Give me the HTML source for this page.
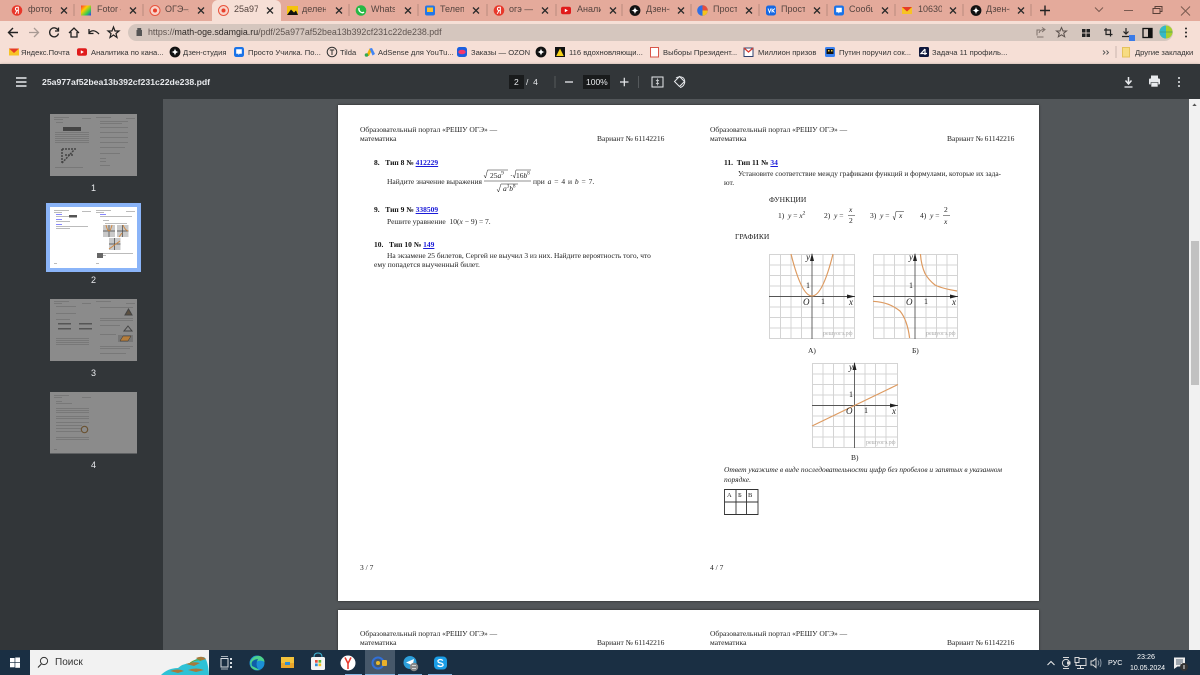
<!DOCTYPE html>
<html lang="ru"><head><meta charset="utf-8"><title>25a977af52bea13b392cf231c22de238.pdf</title>
<style>
html,body{margin:0;padding:0;width:1200px;height:675px;overflow:hidden;background:#525659}
#r{position:relative;width:1200px;height:675px;overflow:hidden;filter:blur(.3px);font-family:"Liberation Sans",sans-serif}
.b{position:absolute}
.t,.m,.p,.c{position:absolute;white-space:nowrap;z-index:2}
.t{top:4px;font-size:9px;line-height:11px;color:#55443f;width:24px;overflow:hidden}
.m{top:47px;font-size:7.6px;line-height:11px;color:#333}
.p{font:7.5px/10px "Liberation Serif",serif;color:#222;margin-top:1px}
.p b{color:#111}.p a{color:#1a1ad8;text-decoration:underline}
.p i{font-style:italic}
.c{color:#e8eaed}
svg{position:absolute;left:0;top:0}
</style></head><body><div id="r">

<div class="b" style="left:0;top:0;width:1200px;height:21px;background:#e4aa9b"></div>
<div class="b" style="left:0;top:21px;width:1200px;height:43px;background:#f6dfd6"></div>
<div class="b" style="left:212px;top:0;width:69px;height:22px;background:#f6dfd6;border-radius:6px 6px 0 0"></div>
<div class="b" style="left:128px;top:24px;width:1045px;height:17px;border-radius:9px;background:#d5c6be"></div>
<div class="b" style="left:0;top:64px;width:1200px;height:35px;background:#323639;box-shadow:0 1px 3px rgba(0,0,0,.5)"></div>
<div class="b" style="left:0;top:99px;width:163px;height:551px;background:#323639"></div>
<div class="b" style="left:163px;top:99px;width:1026px;height:551px;background:#525659"></div>
<div class="b" style="left:338px;top:105px;width:701px;height:496px;background:#fff;box-shadow:0 0 2px #222"></div>
<div class="b" style="left:338px;top:610px;width:701px;height:50px;background:#fff;box-shadow:0 0 2px #222"></div>
<div class="b" style="left:1189px;top:99px;width:11px;height:551px;background:#f1f1f1"></div>
<div class="b" style="left:1191px;top:241px;width:8px;height:144px;background:#c1c1c1"></div>
<div class="b" style="left:0;top:650px;width:1200px;height:25px;background:#1a2f43"></div>
<div class="b" style="left:30px;top:650px;width:179px;height:25px;background:#f2f2f2"></div>
<div class="b" style="left:365px;top:650px;width:30px;height:25px;background:#46586a"></div>

<span class="t" style="left:28px">фоторе</span>
<span class="t" style="left:97px">Fotor —</span>
<span class="t" style="left:165px">ОГЭ–202</span>
<span class="t" style="left:234px">25a977a</span>
<span class="t" style="left:302px">деление</span>
<span class="t" style="left:371px">WhatsAp</span>
<span class="t" style="left:440px">Телепро</span>
<span class="t" style="left:509px">огэ — Я</span>
<span class="t" style="left:577px">Аналит</span>
<span class="t" style="left:646px">Дзен-ст</span>
<span class="t" style="left:713px">Просто</span>
<span class="t" style="left:781px">Просто</span>
<span class="t" style="left:849px">Сообще</span>
<span class="t" style="left:918px">10630 -</span>
<span class="t" style="left:986px">Дзен-ст</span>

<span class="c" style="left:148px;top:26px;font-size:8.85px;line-height:13px;color:#5f5450">https://<span style="color:#2f2a28">math-oge.sdamgia.ru</span>/pdf/25a977af52bea13b392cf231c22de238.pdf</span>

<span class="m" style="left:21px">Яндекс.Почта</span>
<span class="m" style="left:91px">Аналитика по кана...</span>
<span class="m" style="left:183px">Дзен-студия</span>
<span class="m" style="left:248px">Просто Училка. По...</span>
<span class="m" style="left:340px">Tilda</span>
<span class="m" style="left:378px">AdSense для YouTu...</span>
<span class="m" style="left:471px">Заказы — OZON</span>
<span class="m" style="left:569px">116 вдохновляющи...</span>
<span class="m" style="left:663px">Выборы Президент...</span>
<span class="m" style="left:758px">Миллион призов</span>
<span class="m" style="left:839px">Путин поручил сок...</span>
<span class="m" style="left:932px">Задача 11 профиль...</span>
<span class="m" style="left:1135px">Другие закладки</span>

<span class="c" style="left:42px;top:76px;font-size:8.7px;line-height:13px;font-weight:bold">25a977af52bea13b392cf231c22de238.pdf</span>
<div class="b" style="left:509px;top:75px;width:15px;height:14px;background:#191b1c"></div>
<span class="c" style="left:514px;top:76px;font-size:8.5px;line-height:12px">2</span>
<span class="c" style="left:526px;top:76px;font-size:8.5px;line-height:12px">/&nbsp;&nbsp;4</span>
<div class="b" style="left:583px;top:75px;width:27px;height:14px;background:#191b1c"></div>
<span class="c" style="left:586px;top:76px;font-size:8.5px;line-height:12px">100%</span>

<span class="c" style="left:91px;top:183px;font-size:9px;line-height:11px">1</span>
<span class="c" style="left:91px;top:275px;font-size:9px;line-height:11px">2</span>
<span class="c" style="left:91px;top:368px;font-size:9px;line-height:11px">3</span>
<span class="c" style="left:91px;top:460px;font-size:9px;line-height:11px">4</span>

<!-- PDF page left -->
<span class="p" style="left:360px;top:124px">Образовательный портал «РЕШУ ОГЭ» —</span>
<span class="p" style="left:360px;top:133px">математика</span>
<span class="p" style="left:597px;top:133px">Вариант № 61142216</span>
<span class="p" style="left:374px;top:157px"><b>8.&nbsp;&nbsp;&nbsp;Тип 8 № <a>412229</a></b></span>
<span class="p" style="left:387px;top:176px">Найдите значение выражения</span>
<span class="p" style="left:533px;top:176px;word-spacing:1px">при <i>a</i> = 4 и <i>b</i> = 7.</span>
<span class="p" style="left:374px;top:204px"><b>9.&nbsp;&nbsp;&nbsp;Тип 9 № <a>338509</a></b></span>
<span class="p" style="left:387px;top:216px">Решите уравнение&nbsp; 10(<i>x</i> − 9) = 7.</span>
<span class="p" style="left:374px;top:239px"><b>10.&nbsp;&nbsp;&nbsp;Тип 10 № <a>149</a></b></span>
<span class="p" style="left:387px;top:250px;font-size:7.43px">На экзамене 25 билетов, Сергей не выучил 3 из них. Найдите вероятность того, что</span>
<span class="p" style="left:374px;top:259px">ему попадется выученный билет.</span>
<span class="p" style="left:360px;top:562px">3 / 7</span>
<!-- formula 8 -->
<span class="p" style="left:490px;top:170px">25<i>a</i><sup style="font-size:5px;line-height:0">9</sup></span>
<span class="p" style="left:510px;top:170px">·</span>
<span class="p" style="left:516px;top:170px">16<i>b</i><sup style="font-size:5px;line-height:0">8</sup></span>
<span class="p" style="left:503px;top:183px"><i>a</i><sup style="font-size:5px;line-height:0">3</sup><i>b</i><sup style="font-size:5px;line-height:0">8</sup></span>

<!-- PDF page right -->
<span class="p" style="left:710px;top:124px">Образовательный портал «РЕШУ ОГЭ» —</span>
<span class="p" style="left:710px;top:133px">математика</span>
<span class="p" style="left:947px;top:133px">Вариант № 61142216</span>
<span class="p" style="left:724px;top:157px"><b>11.&nbsp;&nbsp;Тип 11 № <a>34</a></b></span>
<span class="p" style="left:738px;top:168px;font-size:7.3px">Установите соответствие между графиками функций и формулами, которые их зада-</span>
<span class="p" style="left:724px;top:177px">ют.</span>
<span class="p" style="left:769px;top:194px">ФУНКЦИИ</span>
<span class="p" style="left:778px;top:210px">1)&nbsp; <i>y</i> = <i>x</i><sup style="font-size:5.5px;line-height:0">2</sup></span>
<span class="p" style="left:824px;top:210px">2)&nbsp; <i>y</i> =</span>
<span class="p" style="left:849px;top:204px"><i>x</i></span>
<span class="p" style="left:849px;top:215px">2</span>
<span class="p" style="left:870px;top:210px">3)&nbsp; <i>y</i> = </span>
<span class="p" style="left:899px;top:210px"><i>x</i></span>
<span class="p" style="left:920px;top:210px">4)&nbsp; <i>y</i> =</span>
<span class="p" style="left:944px;top:204px">2</span>
<span class="p" style="left:944px;top:216px"><i>x</i></span>
<span class="p" style="left:735px;top:231px">ГРАФИКИ</span>
<span class="p" style="left:808px;top:345px">А)</span>
<span class="p" style="left:912px;top:345px">Б)</span>
<span class="p" style="left:851px;top:452px">В)</span>
<span class="p" style="left:724px;top:464px;font-size:7.45px"><i>Ответ укажите в виде последовательности цифр без пробелов и запятых в указанном</i></span>
<span class="p" style="left:724px;top:474px"><i>порядке.</i></span>
<span class="p" style="left:727px;top:490px;font-size:6.5px">А</span>
<span class="p" style="left:738px;top:490px;font-size:6.5px">Б</span>
<span class="p" style="left:748px;top:490px;font-size:6.5px">В</span>
<span class="p" style="left:710px;top:562px">4 / 7</span>

<!-- bottom page -->
<span class="p" style="left:360px;top:628px">Образовательный портал «РЕШУ ОГЭ» —</span>
<span class="p" style="left:360px;top:637px">математика</span>
<span class="p" style="left:597px;top:637px">Вариант № 61142216</span>
<span class="p" style="left:710px;top:628px">Образовательный портал «РЕШУ ОГЭ» —</span>
<span class="p" style="left:710px;top:637px">математика</span>
<span class="p" style="left:947px;top:637px">Вариант № 61142216</span>

<!-- graph labels -->
<span class="p" style="left:806px;top:251px;font-size:9px"><i>y</i></span>
<span class="p" style="left:806px;top:280px;font-size:8px">1</span>
<span class="p" style="left:803px;top:296px;font-size:9px"><i>O</i></span>
<span class="p" style="left:821px;top:296px;font-size:8px">1</span>
<span class="p" style="left:849px;top:296px;font-size:9px"><i>x</i></span>
<span class="p" style="left:823px;top:328px;font-size:6px;color:#aaa">решуогэ.рф</span>
<span class="p" style="left:909px;top:251px;font-size:9px"><i>y</i></span>
<span class="p" style="left:909px;top:280px;font-size:8px">1</span>
<span class="p" style="left:906px;top:296px;font-size:9px"><i>O</i></span>
<span class="p" style="left:924px;top:296px;font-size:8px">1</span>
<span class="p" style="left:952px;top:296px;font-size:9px"><i>x</i></span>
<span class="p" style="left:926px;top:328px;font-size:6px;color:#aaa">решуогэ.рф</span>
<span class="p" style="left:849px;top:361px;font-size:9px"><i>y</i></span>
<span class="p" style="left:849px;top:389px;font-size:8px">1</span>
<span class="p" style="left:846px;top:405px;font-size:9px"><i>O</i></span>
<span class="p" style="left:864px;top:405px;font-size:8px">1</span>
<span class="p" style="left:892px;top:405px;font-size:9px"><i>x</i></span>
<span class="p" style="left:866px;top:437px;font-size:6px;color:#aaa">решуогэ.рф</span>

<!-- taskbar text -->
<span class="c" style="left:55px;top:656px;font-size:10px;line-height:13px;color:#333">Поиск</span>
<span class="c" style="left:1108px;top:657px;font-size:7.2px;line-height:11px;color:#fff">РУС</span>
<span class="c" style="left:1137px;top:651px;font-size:7.2px;line-height:11px;color:#fff">23:26</span>
<span class="c" style="left:1130px;top:663px;font-size:7px;line-height:11px;color:#fff">10.05.2024</span>

<svg width="1200" height="675" viewBox="0 0 1200 675" fill="none">
<defs>
<linearGradient id="rb" x1="0" y1="0" x2="1" y2="1"><stop offset="0" stop-color="#f33"/><stop offset=".35" stop-color="#fc0"/><stop offset=".7" stop-color="#3c5"/><stop offset="1" stop-color="#33f"/></linearGradient>
<g id="x"><path d="M-3-3L3 3M3-3L-3 3" stroke="#2a2a2a" stroke-width="1.3"/></g>
<g id="ya"><circle r="5.3" fill="#e8372a"/><path d="M1.3 3.2V-3.2H.2Q-1.6-3.2-1.6-1.5Q-1.6-.2 0 0L-1.8 3.2M1.3-.1H0" stroke="#fff" stroke-width="1"/></g>
<g id="dz"><circle r="5.4" fill="#111"/><path d="M0-3.6Q.4-.4 3.6 0Q.4.4 0 3.6Q-.4.4-3.6 0Q-.4-.4 0-3.6Z" fill="#fff"/></g>
<g id="oge"><circle r="5" fill="#f9d3c9" stroke="#e8553f" stroke-width="1"/><circle r="2" fill="#e8402c"/></g>
<g id="ch"><rect x="-5" y="-5" width="10" height="10" rx="2.2" fill="#1a73e8"/><path d="M-2.8-2.8H2.8V1.8H.6L-.6 3V1.8H-2.8Z" fill="#fff"/></g>
<g id="yt"><rect x="-5" y="-3.7" width="10" height="7.4" rx="2" fill="#e01b1b"/><path d="M-1.2-1.7L1.9 0L-1.2 1.7Z" fill="#fff"/></g>
<g id="ml"><path d="M-5-3.5H5V3.5H-5Z" fill="#f7c325"/><path d="M-5-3.5L0 1L5-3.5Z" fill="#e63b26"/></g>
</defs>

<!-- tab separators -->
<g stroke="#b98a7e" stroke-width="1"><path d="M74 4V16M143 4V16M349 4V16M418 4V16M487 4V16M556 4V16M622 4V16M691 4V16M759 4V16M827 4V16M895 4V16M963 4V16M1031 4V16"/></g>
<!-- tab icons -->
<use href="#ya" x="17" y="10.500"/>
<rect x="81" y="5.500" width="10" height="10" fill="url(#rb)"/>
<use href="#oge" x="155" y="10.500"/><use href="#oge" x="223.500" y="10.500"/>
<rect x="287" y="6" width="11" height="9" fill="#f4c20d"/><path d="M287 15L291 9.500L294 12.500L296 10.500L298 15Z" fill="#111"/>
<circle cx="361" cy="10.500" r="5.300" fill="#25b844"/><path d="M359 8Q358.500 10.500 360.500 12Q362.500 13.500 364 12" stroke="#fff" stroke-width="1.400"/>
<rect x="425" y="5.500" width="10" height="10" rx="2" fill="#2276e8"/><rect x="427" y="7.500" width="6" height="4.500" fill="#fbc02d"/>
<use href="#ya" x="499" y="10.500"/><use href="#yt" x="566" y="10.500"/><use href="#dz" x="635" y="10.500"/>
<circle cx="702.500" cy="10.500" r="5.300" fill="#2f6fe4"/><path d="M702.500 5.200A5.300 5.300 0 0 1 702.500 15.800Z" fill="#f6c21c"/><path d="M702.500 5.200A5.300 5.300 0 0 1 707.800 10.500H702.500Z" fill="#e84b3c"/>
<rect x="766" y="5.500" width="10" height="10" rx="2.400" fill="#1668e3"/><path d="M768 8.500L769.500 12.500L771 8.500M775 8.500L772.500 10.500L774.500 12.500M772 8.500V12.500" stroke="#fff" stroke-width=".9"/>
<use href="#ch" x="839" y="10.500"/><use href="#ml" x="907" y="10.500"/><use href="#dz" x="976" y="10.500"/>
<!-- tab close -->
<g><use href="#x" x="64" y="10.500"/><use href="#x" x="133" y="10.500"/><use href="#x" x="201" y="10.500"/><use href="#x" x="270" y="10.500"/><use href="#x" x="339" y="10.500"/><use href="#x" x="408" y="10.500"/><use href="#x" x="476" y="10.500"/><use href="#x" x="545" y="10.500"/><use href="#x" x="613" y="10.500"/><use href="#x" x="681" y="10.500"/><use href="#x" x="749" y="10.500"/><use href="#x" x="817" y="10.500"/><use href="#x" x="885" y="10.500"/><use href="#x" x="953" y="10.500"/><use href="#x" x="1021" y="10.500"/></g>
<path d="M1040 10.500H1050M1045 5.500V15.500" stroke="#222" stroke-width="1.400"/>
<!-- window -->
<path d="M1095 7.500L1099 11.500L1103 7.500" stroke="#7a5a50"/>
<path d="M1124 10.500H1133" stroke="#7a5a50"/>
<path d="M1153 8.500H1160V13.500H1153ZM1155 8.500V6.500H1162V11.500H1160" stroke="#5a4038"/>
<path d="M1181 6.500L1190 15.500M1190 6.500L1181 15.500" stroke="#7a5a50"/>

<!-- toolbar -->
<path d="M18 32.500H8.500M13 28L8.500 32.500L13 37" stroke="#222" stroke-width="1.400"/>
<path d="M29 32.500H38.500M34 28L38.500 32.500L34 37" stroke="#a89a94" stroke-width="1.300"/>
<path d="M58 30A4.500 4.500 0 1 0 58.500 33.500M58.500 27.500V31H55" stroke="#222" stroke-width="1.300"/>
<path d="M69 33L74 28L79 33M71 32V37H77V32" stroke="#222" stroke-width="1.300"/>
<path d="M89 33Q93 28 99 34M89 29V33.500H93.500" stroke="#222" stroke-width="1.300"/>
<path d="M113.500 27L115 31H119L116 33.500L117 37.500L113.500 35L110 37.500L111 33.500L108 31H112Z" stroke="#222" stroke-width="1.200"/>
<path d="M137 30.500H141.500V35.500H137ZM137.800 30.500V28.500H140.700V30.500" stroke="#555" fill="#555"/>
<path d="M1037 35.500V30H1040M1043.500 37H1037M1039 33Q1040 29.500 1044 29.500M1042 27.500L1045 29.500L1042 32" stroke="#7d706a"/>
<path d="M1061.500 27.500L1063 31H1066.500L1063.700 33.200L1064.700 36.800L1061.500 34.800L1058.300 36.800L1059.300 33.200L1056.500 31H1060Z" stroke="#5a504c"/>
<g fill="#222"><rect x="1082" y="29" width="3.500" height="3.500"/><rect x="1086.500" y="29" width="3.500" height="3.500"/><rect x="1082" y="33.500" width="3.500" height="3.500"/><rect x="1086.500" y="33.500" width="3.500" height="3.500"/></g>
<path d="M1104 30H1110.500V36.500M1106 28V34.500H1112.500" stroke="#222" stroke-width="1.200"/>
<path d="M1126 28V34M1123.500 31.500L1126 34L1128.500 31.500M1122 36.500H1130" stroke="#222" stroke-width="1.200"/>
<rect x="1129" y="35" width="6" height="6" fill="#3a7be8"/>
<rect x="1143" y="28.500" width="9" height="9" stroke="#111" stroke-width="1.300"/><rect x="1148" y="28.500" width="4" height="9" fill="#111"/>
<circle cx="1166" cy="32" r="6.500" fill="#a7cf2e"/><path d="M1166 25.500A6.500 6.500 0 0 0 1166 38.500" fill="#35b8c8"/><path d="M1159.500 32H1172.500" stroke="#3a8f6a" stroke-width=".6"/>
<g fill="#222"><circle cx="1186" cy="28.500" r="1"/><circle cx="1186" cy="32.500" r="1"/><circle cx="1186" cy="36.500" r="1"/></g>

<!-- bookmarks -->
<g><use href="#ml" transform="translate(14 52)"/><use href="#yt" x="82" y="52"/><use href="#dz" x="175" y="52"/><use href="#ch" x="239" y="52"/>
<circle cx="332" cy="52" r="4.800" stroke="#333"/><path d="M329.800 50H334.200M332 50V55" stroke="#333"/>
<path d="M366 56L369.500 48.500L372 50L369 56Z" fill="#f4b400"/><path d="M369.500 48.500L372 48L375 54L372.500 55.500Z" fill="#4285f4"/><circle cx="366.500" cy="55" r="1.800" fill="#34a853"/>
<rect x="457" y="47" width="10" height="10" rx="2.500" fill="#1a5fe0"/><ellipse cx="462" cy="52" rx="3.700" ry="2.300" fill="#f4386c"/>
<use href="#dz" x="541" y="52"/>
<rect x="555" y="47" width="10" height="10" fill="#111"/><path d="M560 48.500L563.800 56H556.200Z" fill="#f7d117"/>
<rect x="650.500" y="47.500" width="8" height="9.500" stroke="#d9564a" fill="#fff"/>
<path d="M744 48H753V56.500H744Z" fill="#fff" stroke="#30406e"/><path d="M744 48L748.500 52L753 48" stroke="#d83a2e" stroke-width="1.300"/>
<rect x="825" y="47" width="10" height="10" rx="1.500" fill="#3b82f0"/><rect x="826.500" y="49" width="7" height="5" fill="#111"/><rect x="828" y="50" width="1.500" height="1.500" fill="#f5d142"/><rect x="831" y="50" width="1.500" height="1.500" fill="#f5d142"/>
<rect x="919" y="47" width="10" height="10" rx="1.500" fill="#10183c"/><path d="M925 49V55M925 49L921 53.500H927" stroke="#fff" stroke-width="1.200"/>
<path d="M1103 50.500L1105 52.500L1103 54.500M1106.500 50.500L1108.500 52.500L1106.500 54.500" stroke="#555" stroke-width=".9"/>
<path d="M1116 46V58" stroke="#c9b6ae"/>
<path d="M1122.500 47.500H1129.500V57H1122.500Z" fill="#f7dc83" stroke="#e5c25c"/></g>

<!-- pdf toolbar -->
<path d="M16 78H26.500M16 82H26.500M16 86H26.500" stroke="#e8eaed" stroke-width="1.400"/>
<path d="M555 76V88" stroke="#55595c"/><path d="M565 82H573" stroke="#e8eaed" stroke-width="1.300"/>
<path d="M620 82H628.500M624.300 77.700V86.300" stroke="#e8eaed" stroke-width="1.200"/><path d="M638.500 76V88" stroke="#55595c"/>
<rect x="652" y="77" width="11" height="10" stroke="#e8eaed"/><path d="M657.500 78.500V81M656 80L657.500 81.500L659 80M657.500 85.500V83M656 84L657.500 82.500L659 84" stroke="#e8eaed" stroke-width=".7"/>
<path d="M679.500 76.500L684.500 81.500L679.500 86.500L674.500 81.500Z" stroke="#e8eaed"/><path d="M676 78Q680 75.500 683.500 78A6 6 0 0 1 680 87.500" stroke="#e8eaed"/>
<path d="M1128.500 77V83.500M1125.500 80.500L1128.500 84L1131.500 80.500" stroke="#e8eaed" stroke-width="1.500"/><path d="M1124.500 87H1132.500" stroke="#e8eaed" stroke-width="1.300"/>
<rect x="1149" y="78.500" width="11" height="6" rx="1" fill="#e8eaed"/><rect x="1151" y="75.500" width="7" height="3" fill="#e8eaed"/><rect x="1151" y="82.500" width="7" height="4.500" fill="#e8eaed" stroke="#323639" stroke-width=".6"/>
<g fill="#e8eaed"><circle cx="1179" cy="78" r="1"/><circle cx="1179" cy="82" r="1"/><circle cx="1179" cy="86" r="1"/></g>

<!-- thumbnails -->
<rect x="46" y="203" width="95" height="69" fill="#8ab4f8"/>
<rect x="50" y="207" width="87" height="61" fill="#fff"/>
<rect x="50" y="114" width="87" height="62" fill="#8b8b8b"/>
<rect x="50" y="299" width="87" height="62" fill="#8b8b8b"/>
<rect x="50" y="392" width="87" height="61.500" fill="#8b8b8b"/>
<!-- thumb 1 -->
<g fill="#787878">
<rect x="54" y="117" width="15" height="1"/><rect x="54" y="119" width="9" height="1"/><rect x="82" y="118" width="9" height="1"/><rect x="96" y="117" width="15" height="1"/><rect x="126" y="118" width="9" height="1"/>
<rect x="56" y="122" width="7" height="1"/><rect x="63" y="127" width="18" height="4" fill="#444"/>
<rect x="55" y="132" width="34" height="1"/><rect x="55" y="134" width="34" height="1"/><rect x="55" y="136" width="34" height="1"/><rect x="55" y="138" width="34" height="1"/><rect x="55" y="140" width="34" height="1"/><rect x="55" y="142" width="34" height="1"/>
<rect x="100" y="121" width="28" height="1"/><rect x="100" y="123" width="22" height="1"/><rect x="100" y="127" width="28" height="1"/><rect x="100" y="132" width="28" height="1"/><rect x="100" y="137" width="28" height="1"/><rect x="100" y="142" width="28" height="1"/><rect x="100" y="147" width="25" height="1"/><rect x="100" y="153" width="20" height="1"/><rect x="100" y="158" width="6" height="1"/><rect x="100" y="161" width="6" height="1"/><rect x="100" y="165" width="10" height="1"/>
<rect x="55" y="167" width="28" height="1"/>
</g>
<path d="M62 149H77M62 149V163M62 163L74 150M65 155H73" stroke="#444" stroke-width="1.500" stroke-dasharray="2 1"/>
<!-- thumb 2 -->
<g fill="#bbb">
<rect x="54" y="210" width="15" height="1"/><rect x="54" y="212" width="8" height="1"/><rect x="82" y="211" width="9" height="1"/><rect x="96" y="210" width="15" height="1"/><rect x="96" y="212" width="8" height="1"/><rect x="126" y="211" width="9" height="1"/>
<rect x="56" y="214" width="6" height="1" fill="#88f"/><rect x="56" y="216" width="14" height="1"/><rect x="56" y="219" width="6" height="1" fill="#88f"/><rect x="56" y="221" width="14" height="1"/><rect x="56" y="224" width="6" height="1" fill="#88f"/><rect x="56" y="226" width="32" height="1"/><rect x="56" y="228" width="14" height="1"/>
<rect x="100" y="214" width="6" height="1" fill="#88f"/><rect x="100" y="216" width="32" height="1"/><rect x="103" y="220" width="6" height="1"/><rect x="105" y="223" width="22" height="1"/><rect x="100" y="253" width="33" height="1"/><rect x="100" y="255" width="6" height="1"/>
<rect x="54" y="263" width="3" height="1"/><rect x="96" y="263" width="3" height="1"/>
</g>
<rect x="69" y="215" width="8" height="2.500" fill="#555"/>
<g fill="#c9c9c9"><rect x="103" y="225" width="12" height="12"/><rect x="117" y="225" width="11.500" height="12"/><rect x="109" y="238" width="11.500" height="12"/></g>
<g stroke="#444" stroke-width=".7"><path d="M103 231H115M109 225V237M117 231H128.500M122.500 225V237M109 244H120.500M114.500 238V250"/></g>
<path d="M106 225Q109 237 112 225M119 237Q122 233 122 233M123 225Q125 230 128 231M109 249L120 241" stroke="#d08a45" stroke-width="1"/>
<rect x="97" y="253" width="6" height="5" fill="#666"/>
<!-- thumb 3 -->
<g fill="#787878">
<rect x="54" y="301" width="15" height="1"/><rect x="54" y="303" width="8" height="1"/><rect x="82" y="303" width="9" height="1"/><rect x="96" y="301" width="15" height="1"/><rect x="126" y="303" width="9" height="1"/>
<rect x="56" y="306" width="20" height="1"/><rect x="56" y="313" width="20" height="1"/><rect x="56" y="319" width="14" height="1"/>
<rect x="58" y="323" width="13" height="1.500" fill="#555"/><rect x="79" y="323" width="13" height="1.500" fill="#555"/><rect x="58" y="328" width="13" height="1.500" fill="#555"/><rect x="79" y="328" width="13" height="1.500" fill="#555"/>
<rect x="56" y="338" width="33" height="1"/><rect x="56" y="340" width="33" height="1"/><rect x="56" y="342" width="33" height="1"/><rect x="56" y="344" width="33" height="1"/>
<rect x="100" y="307" width="33" height="1"/><rect x="100" y="318" width="33" height="1"/><rect x="100" y="320" width="33" height="1"/><rect x="100" y="325" width="20" height="1"/><rect x="100" y="334" width="16" height="1"/><rect x="100" y="346" width="33" height="1"/><rect x="100" y="348" width="30" height="1"/><rect x="100" y="353" width="26" height="1"/>
</g>
<path d="M128.500 309L132 315H125Z" fill="#5c5040" stroke="#444"/>
<path d="M128 326L132 331H124Z" stroke="#444"/>
<rect x="118" y="335" width="15" height="7" fill="#777"/><path d="M120 341L123 336H131L128 341Z" fill="#b47d3c" stroke="#333" stroke-width=".5"/>
<!-- thumb 4 -->
<g fill="#787878">
<rect x="54" y="395" width="15" height="1"/><rect x="54" y="397" width="8" height="1"/><rect x="82" y="397" width="9" height="1"/>
<rect x="56" y="401" width="6" height="1"/><rect x="56" y="403" width="16" height="1"/><rect x="56" y="408" width="33" height="1"/><rect x="56" y="410" width="33" height="1"/><rect x="56" y="412" width="33" height="1"/><rect x="56" y="416" width="33" height="1"/><rect x="56" y="418" width="33" height="1"/><rect x="56" y="422" width="33" height="1"/><rect x="56" y="425" width="26" height="1"/><rect x="56" y="428" width="25" height="1"/><rect x="56" y="431" width="25" height="1"/><rect x="56" y="437" width="33" height="1"/><rect x="56" y="439" width="33" height="1"/>
<rect x="54" y="449" width="3" height="1"/>
</g>
<circle cx="84.500" cy="429.500" r="3.200" stroke="#6a5232" stroke-width="1.200"/>

<!-- formula lines -->
<path d="M484 181H531" stroke="#222" stroke-width=".6"/>
<path d="M484 175L485.500 178L487.500 170H508M513 175L514.500 178L516 170H531M497 189L498.500 192L501 184H518" stroke="#222" stroke-width=".5" fill="none"/>
<path d="M848 215.500H855M943 215.500H950" stroke="#222" stroke-width=".6"/>
<path d="M893 216L894.500 220L896 211.500H904" stroke="#222" stroke-width=".5"/>

<!-- Graphs -->
<g stroke="#d4d4d4" stroke-width="1">
<path d="M769 254.500H855M769 265H855M769 275.500H855M769 286H855M769 307H855M769 317.500H855M769 328H855M769 338.500H855M769.500 254V339M780.500 254V339M791 254V339M801.500 254V339M823 254V339M833.500 254V339M844 254V339M854.500 254V339"/>
<path d="M873 254.500H958M873 265H958M873 275.500H958M873 286H958M873 307H958M873 317.500H958M873 328H958M873 338.500H958M873.500 254V339M884 254V339M894.500 254V339M905 254V339M926 254V339M936.500 254V339M947 254V339M957.500 254V339"/>
<path d="M812 363.500H898M812 374H898M812 384.500H898M812 395H898M812 416H898M812 426.500H898M812 437H898M812 447.500H898M812.500 363V448M823 363V448M833.500 363V448M844 363V448M865 363V448M875.500 363V448M886 363V448M897.500 363V448"/>
</g>
<g stroke="#555" stroke-width=".9">
<path d="M769 296.500H855M812 254V339M873 296.500H958M915 254V339M812 405.500H898M854.500 363V448"/>
</g>
<g fill="#222"><path d="M812 253L814 261H810ZM855 296.500L847 294.500V298.500ZM915 253L917 261H913ZM958 296.500L950 294.500V298.500ZM854.500 362L856.500 370H852.500ZM898 405.500L890 403.500V407.500Z"/></g>
<g stroke="#dd9a60" stroke-width="1.200" fill="none">
<path d="M791 254Q812 338 833 254"/>
<path d="M920.400 254C921 262 922.500 268 925 273.500C927 277 930 281 935 285C939 287 945 289 957 291"/>
<path d="M873 301.300C885 302 892 305 900 311C904 316 908 325 909.600 338"/>
<path d="M812 426L898 384.500"/>
</g>
<!-- answer table -->
<path d="M724.500 489.500H758V514.500H724.500ZM724.500 502H758M736 489.500V514.500M746.500 489.500V514.500" stroke="#333" stroke-width=".9"/>

<!-- scrollbar arrow -->
<path d="M1194.500 103.500L1196.700 106H1192.300Z" fill="#555"/>

<!-- taskbar -->
<g fill="#fff"><rect x="10" y="658" width="4.600" height="4.300"/><rect x="15.300" y="657.500" width="4.700" height="4.800"/><rect x="10" y="663" width="4.600" height="4.300"/><rect x="15.300" y="663" width="4.700" height="4.800"/></g>
<circle cx="44" cy="661" r="3.600" stroke="#333" stroke-width="1"/><path d="M41.300 664L38 667.500" stroke="#333" stroke-width="1.100"/>
<path d="M161 675Q168 668 178 668Q182 664 190 663Q196 658 204 657Q208 660 209 675Z" fill="#2ec2d6"/>
<path d="M170 671Q178 668 184 671L178 673ZM186 664Q194 661 200 663L194 666ZM188 670Q196 667 204 670L196 672ZM196 658Q202 655 206 659L200 661Z" fill="#a8793c"/><path d="M190 663Q196 659 201 660" stroke="#5fa33a"/>
<rect x="221" y="658.500" width="7" height="8.500" stroke="#d8dde2"/><path d="M231 658V660M231 662V664M231 666V668" stroke="#d8dde2" stroke-width="2"/><path d="M221 656.500H228M221 669H228" stroke="#d8dde2" stroke-width=".8"/>
<circle cx="257" cy="663" r="7.500" fill="#1b8fd6"/><path d="M250 662Q253 655 260 656Q264.500 658 264.500 662Q262 660 258 661Q255 662 256 667Q258 670.500 261 670Q254 671 251 667Z" fill="#4cd28c"/><path d="M252 666Q250 660 258 659Q255 664 258 669Z" fill="#0f5ea8"/>
<rect x="281" y="657" width="13" height="11" fill="#f3c33c"/><rect x="281" y="663" width="13" height="5" fill="#e9a62a"/><rect x="285" y="662" width="5" height="3" fill="#2e8fd8"/>
<rect x="311" y="657" width="14" height="13" rx="1.500" fill="#f4f4f4"/><path d="M314 657Q314 653 318 653Q322 653 322 657" stroke="#3fb8d8"/>
<rect x="315" y="660" width="2.700" height="2.700" fill="#e84b3c"/><rect x="318.500" y="660" width="2.700" height="2.700" fill="#5cb83a"/><rect x="315" y="663.500" width="2.700" height="2.700" fill="#2e8fd8"/><rect x="318.500" y="663.500" width="2.700" height="2.700" fill="#f6c21c"/>
<circle cx="348" cy="663" r="7.500" fill="#fff"/><path d="M345 657.500L348 663.500L351 657.500M348 663.500V669" stroke="#e8372a" stroke-width="1.500"/>
<circle cx="378" cy="663" r="5.500" stroke="#3170d8" stroke-width="2"/><circle cx="378" cy="663" r="2" fill="#e8b92a"/><rect x="382" y="660" width="5" height="6" rx="1" fill="#e9b12a"/>
<rect x="345" y="674" width="17" height="1" fill="#84b6e2"/><rect x="365" y="674" width="30" height="1" fill="#84b6e2"/><rect x="398" y="674" width="24" height="1" fill="#84b6e2"/><rect x="428" y="674" width="24" height="1" fill="#84b6e2"/>
<circle cx="410" cy="662.500" r="6.500" fill="#2c9fdb"/><path d="M406 662.500L414 659L412.500 666L409.500 664Z" fill="#fff"/>
<circle cx="414" cy="667" r="4.200" fill="#888"/><path d="M412 665.500H416M412 668.500H416" stroke="#eee" stroke-width=".7"/>
<rect x="434" y="656.500" width="13" height="13" rx="4" fill="#1b9ee6"/><path d="M443 660.500Q440 658.500 438 660.500Q437.500 662.500 440.500 663Q443.500 663.500 443 665.500Q441 667.500 437.500 665.500" stroke="#fff" stroke-width="1.300"/>
<path d="M1047.500 665L1051 661.500L1054.500 665" stroke="#e6e6e6" stroke-width="1.100"/>
<circle cx="1066" cy="663" r="3.600" stroke="#d9d9d9"/><path d="M1063 657.500H1069M1063 668.500H1069" stroke="#d9d9d9"/><rect x="1067" y="661.500" width="3.500" height="3" fill="#d9d9d9"/>
<path d="M1076 658.500H1086V665.500H1076ZM1080.500 665.500V668.500M1077 668.500H1084" stroke="#d9d9d9"/><rect x="1075" y="657.500" width="4" height="5" fill="#1a2f43" stroke="#d9d9d9"/>
<path d="M1091 661H1093L1096 658.500V667.500L1093 665H1091Z" stroke="#d9d9d9"/><path d="M1098 660.500Q1099.500 663 1098 665.500M1100 659Q1102 663 1100 667" stroke="#8996a3"/>
<path d="M1174 657.500H1185V666.500H1177.500L1174 669Z" fill="#eee"/><path d="M1176 660H1183M1176 662H1183M1176 664H1181" stroke="#1a2f43" stroke-width=".7"/>
<circle cx="1184" cy="667" r="4" fill="#333"/><path d="M1184 665V669" stroke="#fff" stroke-width=".9"/>
</svg>
</div></body></html>
